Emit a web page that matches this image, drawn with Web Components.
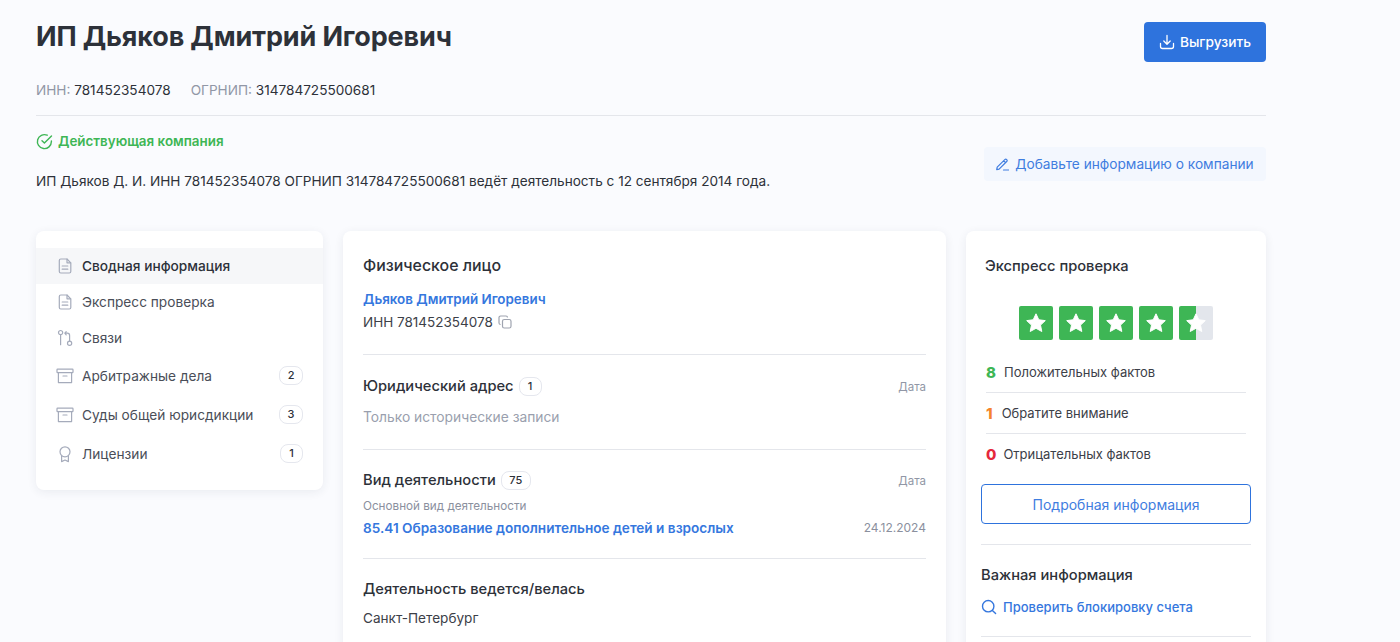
<!DOCTYPE html>
<html lang="ru">
<head>
<meta charset="utf-8">
<title>ИП Дьяков Дмитрий Игоревич</title>
<style>
  html, body { margin: 0; height: 642px; overflow: hidden; background: #fafbfe; }
  body { font-family: Inter, "Noto Sans", sans-serif; color: #2d3139; }
  app-page { width: 1230px; margin-left: 36px; }
</style>
</head>
<body>
<app-page>
  <company-header></company-header>
  <side-nav slot="left">
    <nav-item icon="doc" active>Сводная информация</nav-item>
    <nav-item icon="doc">Экспресс проверка</nav-item>
    <nav-item icon="links">Связи</nav-item>
    <nav-item icon="archive" count="2">Арбитражные дела</nav-item>
    <nav-item icon="archive" count="3">Суды общей юрисдикции</nav-item>
    <nav-item icon="award" count="1">Лицензии</nav-item>
  </side-nav>
  <main-card slot="main"></main-card>
  <check-card slot="right"></check-card>
</app-page>

<script>
  const ICONS = {
    doc: '<path d="M4.8 2h6.2l3.8 3.8v8.7a1.5 1.5 0 0 1-1.5 1.5H4.8a1.5 1.5 0 0 1-1.5-1.5v-11A1.5 1.5 0 0 1 4.8 2z"/><path d="M11 2.2v3.6h3.6M6.2 9h5.6M6.2 12.2h5.6"/>',
    links: '<circle cx="4.6" cy="3.6" r="2.1"/><path d="M4.6 5.7v10"/><circle cx="13.6" cy="14.2" r="2.1"/><path d="M13.6 12.1V6.4a2.2 2.2 0 0 0-2.2-2.2H9.6M10.2 2.6 8.8 4.2l1.4 1.6"/>',
    archive: '<rect x="1" y="2.2" width="16" height="3.4" rx=".6"/><path d="M2.4 5.6v10h13.2v-10M7 9h4"/>',
    award: '<circle cx="9" cy="6.8" r="5"/><path d="M5.6 11v5.6L9 15l3.4 1.6V11"/>'
  };

  class CountBadge extends HTMLElement {
    constructor() {
      super();
      this.attachShadow({ mode: 'open' }).innerHTML = `
        <style>
          :host {
            display: inline-flex; align-items: center; justify-content: center;
            box-sizing: border-box; height: 19px; min-width: 23px; padding: 0 7.5px;
            border: 1px solid #e5e7ee; border-radius: 8px; background: #fff;
            font: 500 11px/1 Inter, sans-serif; color: #2d3139;
          }
        </style>
        <slot></slot>`;
    }
  }
  customElements.define('count-badge', CountBadge);

  class AppPage extends HTMLElement {
    constructor() {
      super();
      this.attachShadow({ mode: 'open' }).innerHTML = `
        <style>
          :host { display: block; }
          .columns { display: grid; grid-template-columns: 287px 603px 300px; gap: 20px; align-items: start; margin-top: 40px; }
        </style>
        <slot></slot>
        <div class="columns">
          <slot name="left"></slot>
          <slot name="main"></slot>
          <slot name="right"></slot>
        </div>`;
    }
  }
  customElements.define('app-page', AppPage);

  class CompanyHeader extends HTMLElement {
    constructor() {
      super();
      this.attachShadow({ mode: 'open' }).innerHTML = `
        <style>
          :host { display: block; padding-top: 22px; }
          .top { display: flex; justify-content: space-between; align-items: flex-start; height: 40px; }
          h1 { margin: -4px 0 0; font-size: 27px; line-height: 38px; font-weight: 700; color: #2d3139; letter-spacing: -.14px; }
          .export {
            display: flex; align-items: center; justify-content: center; gap: 5px;
            width: 122px; height: 40px; border-radius: 4px; background: #2e73dd;
            color: #fff; font-size: 13.7px; font-weight: 500;
          }
          .export svg { width: 16px; height: 16px; fill: none; stroke: #fff; stroke-width: 1.3; stroke-linecap: round; stroke-linejoin: round; }
          .ids { display: flex; gap: 20px; margin-top: 18px; font-size: 13.6px; line-height: 20px; }
          .ids span span { color: #9197a6; }
          hr { border: 0; border-top: 1px solid #e4e6eb; margin: 15px 0 0; }
          .bottom { display: flex; justify-content: space-between; align-items: flex-end; }
          .status { display: flex; align-items: center; gap: 5px; margin-top: 15px; color: #3eb655; font-size: 13.4px; line-height: 20px; font-weight: 600; }
          .status svg { width: 17px; height: 17px; fill: none; stroke: #3eb655; stroke-width: 1.4; stroke-linecap: round; stroke-linejoin: round; }
          p { margin: 20px 0 0; font-size: 13.6px; line-height: 20px; color: #2d3139; }
          .add {
            display: flex; align-items: center; justify-content: center; gap: 6px;
            box-sizing: border-box; width: 282px; height: 34px; margin-bottom: 10px;
            background: #f3f7fe; border-radius: 4px; color: #3f7de0; font-size: 13.7px;
          }
          .add svg { width: 13px; height: 13px; fill: none; stroke: #3f7de0; stroke-width: 1.2; stroke-linecap: round; stroke-linejoin: round; }
        </style>
        <div class="top">
          <h1>ИП Дьяков Дмитрий Игоревич</h1>
          <div class="export">
            <svg viewBox="0 0 16 16"><path d="M8 1.5v8.5M4.8 7 8 10.2 11.2 7M1.5 9.5v3a2 2 0 0 0 2 2h9a2 2 0 0 0 2-2v-3"/></svg>
            Выгрузить
          </div>
        </div>
        <div class="ids">
          <span><span>ИНН:</span> 781452354078</span>
          <span><span>ОГРНИП:</span> 314784725500681</span>
        </div>
        <hr>
        <div class="bottom">
          <div>
            <div class="status">
              <svg viewBox="0 0 17 17"><path d="M15.4 7.9v.7a7 7 0 1 1-4.2-6.4"/><path d="M15.5 3 8.4 10.1 6 7.8"/></svg>
              Действующая компания
            </div>
            <p>ИП Дьяков Д. И. ИНН 781452354078 ОГРНИП 314784725500681 ведёт деятельность с 12 сентября 2014 года.</p>
          </div>
          <div class="add">
            <svg viewBox="0 0 13 13"><path d="M1.2 9.2 8.8 1.6a1.3 1.3 0 0 1 1.9 1.9L3.1 11.1l-2.4.5zM7.7 2.8l1.9 1.9M7.5 12h5"/></svg>
            Добавьте информацию о компании
          </div>
        </div>`;
    }
  }
  customElements.define('company-header', CompanyHeader);

  class SideNav extends HTMLElement {
    constructor() {
      super();
      this.attachShadow({ mode: 'open' }).innerHTML = `
        <style>
          :host {
            display: block; padding: 17px 0 17px; background: #fff; border-radius: 8px;
            box-shadow: 0 2px 10px rgba(40, 50, 80, .08);
          }
        </style>
        <slot></slot>`;
    }
  }
  customElements.define('side-nav', SideNav);

  class NavItem extends HTMLElement {
    connectedCallback() {
      const count = this.getAttribute('count');
      const icon = ICONS[this.getAttribute('icon')];
      this.attachShadow({ mode: 'open' }).innerHTML = `
        <style>
          :host { display: flex; align-items: center; height: ${count ? 39 : 36}px; padding: 0 20px; font-size: 13.7px; color: #4a4e58; }
          :host([active]) { background: #f6f7f9; color: #2d3139; font-weight: 500; }
          svg { width: 18px; height: 18px; margin-right: 8px; fill: none; stroke: #a5abbb; stroke-width: 1.2; stroke-linecap: round; stroke-linejoin: round; flex: none; }
          span { flex: 1; }
        </style>
        <svg viewBox="0 0 18 18">${icon}</svg>
        <span><slot></slot></span>
        ${count ? `<count-badge>${count}</count-badge>` : ''}`;
    }
  }
  customElements.define('nav-item', NavItem);

  class MainCard extends HTMLElement {
    constructor() {
      super();
      this.attachShadow({ mode: 'open' }).innerHTML = `
        <style>
          :host { display: block; padding: 0 20px; background: #fff; border-radius: 8px; box-shadow: 0 2px 10px rgba(40, 50, 80, .08); font-size: 14px; height: 460px; }
          section { border-bottom: 1px solid #e4e6eb; }
          section:last-child { border: 0; }
          h3 { margin: 0; font-size: 14.7px; line-height: 22px; font-weight: 500; color: #2d3139; }
          .person h3 { font-size: 15.9px; }
          .person { height: 124px; padding-top: 24px; box-sizing: border-box; }
          .name { margin-top: 12px; line-height: 20px; font-size: 13.4px; font-weight: 600; color: #3577de; }
          .inn { display: flex; align-items: center; gap: 5px; margin-top: 3px; line-height: 20px; color: #3c4048; font-size: 13.5px; }
          .inn svg { width: 14px; height: 14px; fill: none; stroke: #9fa4b0; stroke-width: 1.2; }
          .head { display: flex; align-items: center; gap: 5px; }
          .date { margin: 2px 0 0 auto; font-size: 11.5px; color: #9197a6; }
          .address { height: 95px; padding-top: 20px; box-sizing: border-box; }
          .muted { margin-top: 10px; line-height: 20px; font-size: 13.8px; color: #9a9fae; }
          .activity { height: 109px; padding-top: 19px; box-sizing: border-box; }
          .sub { margin-top: 7px; font-size: 11.7px; line-height: 16px; color: #8b909e; }
          .row { display: flex; justify-content: space-between; align-items: center; margin-top: 4px; line-height: 20px; }
          .row a { font-size: 13.6px; font-weight: 600; color: #3577de; }
          .row span { font-size: 12px; color: #8b909e; }
          .place { padding-top: 19px; }
          .place div { margin-top: 8px; line-height: 20px; font-size: 13.6px; color: #3c4048; }
        </style>
        <section class="person">
          <h3>Физическое лицо</h3>
          <div class="name">Дьяков Дмитрий Игоревич</div>
          <div class="inn">ИНН 781452354078
            <svg viewBox="0 0 14 14"><rect x="4.5" y="4.5" width="8.5" height="8.5" rx="1.8"/><path d="M2.6 9.5A1.6 1.6 0 0 1 1 8V2.6A1.6 1.6 0 0 1 2.6 1H8a1.6 1.6 0 0 1 1.5 1.6"/></svg>
          </div>
        </section>
        <section class="address">
          <div class="head"><h3>Юридический адрес</h3><count-badge>1</count-badge><span class="date">Дата</span></div>
          <div class="muted">Только исторические записи</div>
        </section>
        <section class="activity">
          <div class="head"><h3>Вид деятельности</h3><count-badge>75</count-badge><span class="date">Дата</span></div>
          <div class="sub">Основной вид деятельности</div>
          <div class="row"><a>85.41 Образование дополнительное детей и взрослых</a><span>24.12.2024</span></div>
        </section>
        <section class="place">
          <h3>Деятельность ведется/велась</h3>
          <div>Санкт-Петербург</div>
        </section>`;
    }
  }
  customElements.define('main-card', MainCard);

  class CheckCard extends HTMLElement {
    constructor() {
      super();
      const star = '<svg viewBox="0 0 34 34"><path fill="#fff" stroke="#fff" stroke-width="1" stroke-linejoin="round" d="M17 7.8l2.8 6 6.5.8-4.8 4.5 1.3 6.4-5.8-3.2-5.8 3.2 1.3-6.4-4.8-4.5 6.5-.8z"/></svg>';
      this.attachShadow({ mode: 'open' }).innerHTML = `
        <style>
          :host { display: block; padding: 24px 15px 0; background: #fff; border-radius: 8px; box-shadow: 0 2px 10px rgba(40, 50, 80, .08); height: 460px; }
          h3 { margin: 0; font-size: 14.7px; line-height: 22px; font-weight: 500; color: #2d3139; }
          .title { margin-left: 4px; }
          .stars { display: flex; justify-content: center; gap: 6px; margin-top: 29px; }
          .star { width: 34px; height: 34px; border-radius: 2px; background: #3eb655; }
          .star svg { display: block; width: 34px; height: 34px; }
          .half { background: linear-gradient(90deg, #3eb655 50%, #e3e6ec 50%); }
          .facts { margin: 12px 5px 0; }
          .fact { display: flex; align-items: center; height: 40px; font-size: 13px; color: #3c4048; border-bottom: 1px solid #e4e6eb; }
          .fact:last-child { border: 0; }
          .fact b { font-size: 15px; font-weight: 800; margin-right: 8px; }
          .more {
            display: flex; align-items: center; justify-content: center;
            box-sizing: border-box; height: 40px; margin-top: 10px;
            border: 1px solid #2e73dd; border-radius: 4px; color: #3f7de0; font-size: 14px;
          }
          hr { border: 0; border-top: 1px solid #e4e6eb; margin: 20px 0 0; }
          .important { margin-top: 19px; }
          .check { display: flex; align-items: center; gap: 6px; margin-top: 11px; line-height: 20px; font-size: 13px; font-weight: 500; color: #3577de; }
          .check svg { width: 16px; height: 16px; fill: none; stroke: #3577de; stroke-width: 1.4; stroke-linecap: round; }
          .last { margin-top: 19px; }
        </style>
        <h3 class="title">Экспресс проверка</h3>
        <div class="stars">
          <div class="star">${star}</div><div class="star">${star}</div><div class="star">${star}</div><div class="star">${star}</div><div class="star half">${star}</div>
        </div>
        <div class="facts">
          <div class="fact"><b style="color:#3eb655">8</b>Положительных фактов</div>
          <div class="fact"><b style="color:#f5842b;margin-right:9px">1</b>Обратите внимание</div>
          <div class="fact"><b style="color:#e5283c;margin-right:7px">0</b>Отрицательных фактов</div>
        </div>
        <div class="more">Подробная информация</div>
        <hr>
        <h3 class="important">Важная информация</h3>
        <div class="check">
          <svg viewBox="0 0 16 16"><circle cx="7.2" cy="7.2" r="5.7"/><path d="M11.4 11.4 14.6 14.6"/></svg>
          Проверить блокировку счета
        </div>
        <hr class="last">`;
    }
  }
  customElements.define('check-card', CheckCard);
</script>
</body>
</html>
